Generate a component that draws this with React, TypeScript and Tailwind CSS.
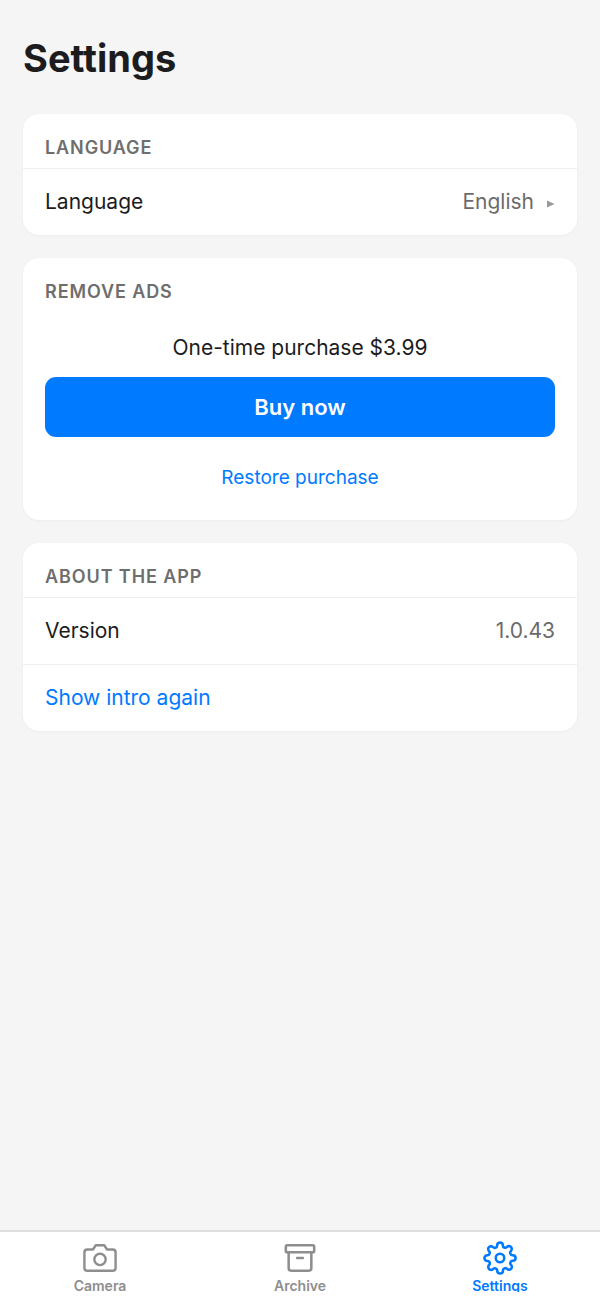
import * as React from "react"
import { FiCamera, FiSettings } from "react-icons/fi"
import { Archive } from "lucide-react"

function Card({ title, divided, children }: { title: string; divided?: boolean; children: React.ReactNode }) {
    return (
        <section className="bg-white rounded-2xl overflow-hidden shadow-[0_1px_3px_rgba(0,0,0,0.04)]">
            <h2
                className={`px-[22px] pt-[22px] pb-2 text-[18px] leading-6 font-semibold tracking-wider uppercase text-[#6e6e6e] ${
                    divided ? "border-b border-[#efefef]" : ""
                }`}
            >
                {title}
            </h2>
            {children}
        </section>
    )
}

function Tab({ label, icon, active }: { label: string; icon: React.ReactNode; active?: boolean }) {
    return (
        <a
            href="#"
            aria-current={active ? "page" : undefined}
            className={`flex-1 flex flex-col items-center ${active ? "text-[#007aff]" : "text-[#8e8e8e]"}`}
        >
            {icon}
            <span className="mt-[5px] text-[14px] leading-3 font-semibold">{label}</span>
        </a>
    )
}

export default function App() {
    return (
        <div className="flex flex-col min-h-screen bg-[#f5f5f5] text-[#1c1c1e] font-['Inter','Liberation_Sans',sans-serif]">
            <main className="flex-1 px-[23px] pt-8">
                <h1 className="text-[38px] leading-[52px] font-bold">Settings</h1>

                <div className="flex flex-col gap-[23px] mt-[30px]">
                    <Card title="Language" divided>
                        <button type="button" className="flex justify-between items-center w-full h-[66px] px-[22px] text-[21px]">
                            <span>Language</span>
                            <span className="flex items-center gap-3 text-[#6b6b6b]">
                                English
                                <svg width="9" height="8" viewBox="0 0 9 8" className="mt-1 fill-[#999]" aria-hidden="true">
                                    <path d="M1 0.5 8.5 4 1 7.5Z" />
                                </svg>
                            </span>
                        </button>
                    </Card>

                    <Card title="Remove ads">
                        <div className="flex flex-col items-center px-[22px] pt-5 pb-[22px]">
                            <p className="text-[21px] leading-8">One-time purchase $3.99</p>
                            <button type="button" className="w-full h-15 mt-[13px] rounded-[11px] bg-[#007aff] text-white text-[22px] font-semibold">
                                Buy now
                            </button>
                            <button type="button" className="h-10 mt-[21px] text-[19px] text-[#007aff]">
                                Restore purchase
                            </button>
                        </div>
                    </Card>

                    <Card title="About the app" divided>
                        <div className="flex justify-between items-center h-[67px] px-[22px] text-[21px] border-b border-[#efefef]">
                            <span>Version</span>
                            <span className="text-[#6b6b6b]">1.0.43</span>
                        </div>
                        <button type="button" className="flex items-center w-full h-[66px] px-[22px] text-[21px] text-[#007aff]">
                            Show intro again
                        </button>
                    </Card>
                </div>
            </main>

            <nav className="bg-white border-t-2 border-[#dfdfdf] pb-[7px]">
                <div className="flex h-[60px] pt-[9px] overflow-hidden">
                    <Tab label="Camera" icon={<FiCamera size={34} strokeWidth={1.7} className="shrink-0" />} />
                    <Tab label="Archive" icon={<Archive size={34} strokeWidth={1.8} className="shrink-0" />} />
                    <Tab label="Settings" icon={<FiSettings size={34} strokeWidth={1.8} className="shrink-0" />} active />
                </div>
            </nav>
        </div>
    )
}
